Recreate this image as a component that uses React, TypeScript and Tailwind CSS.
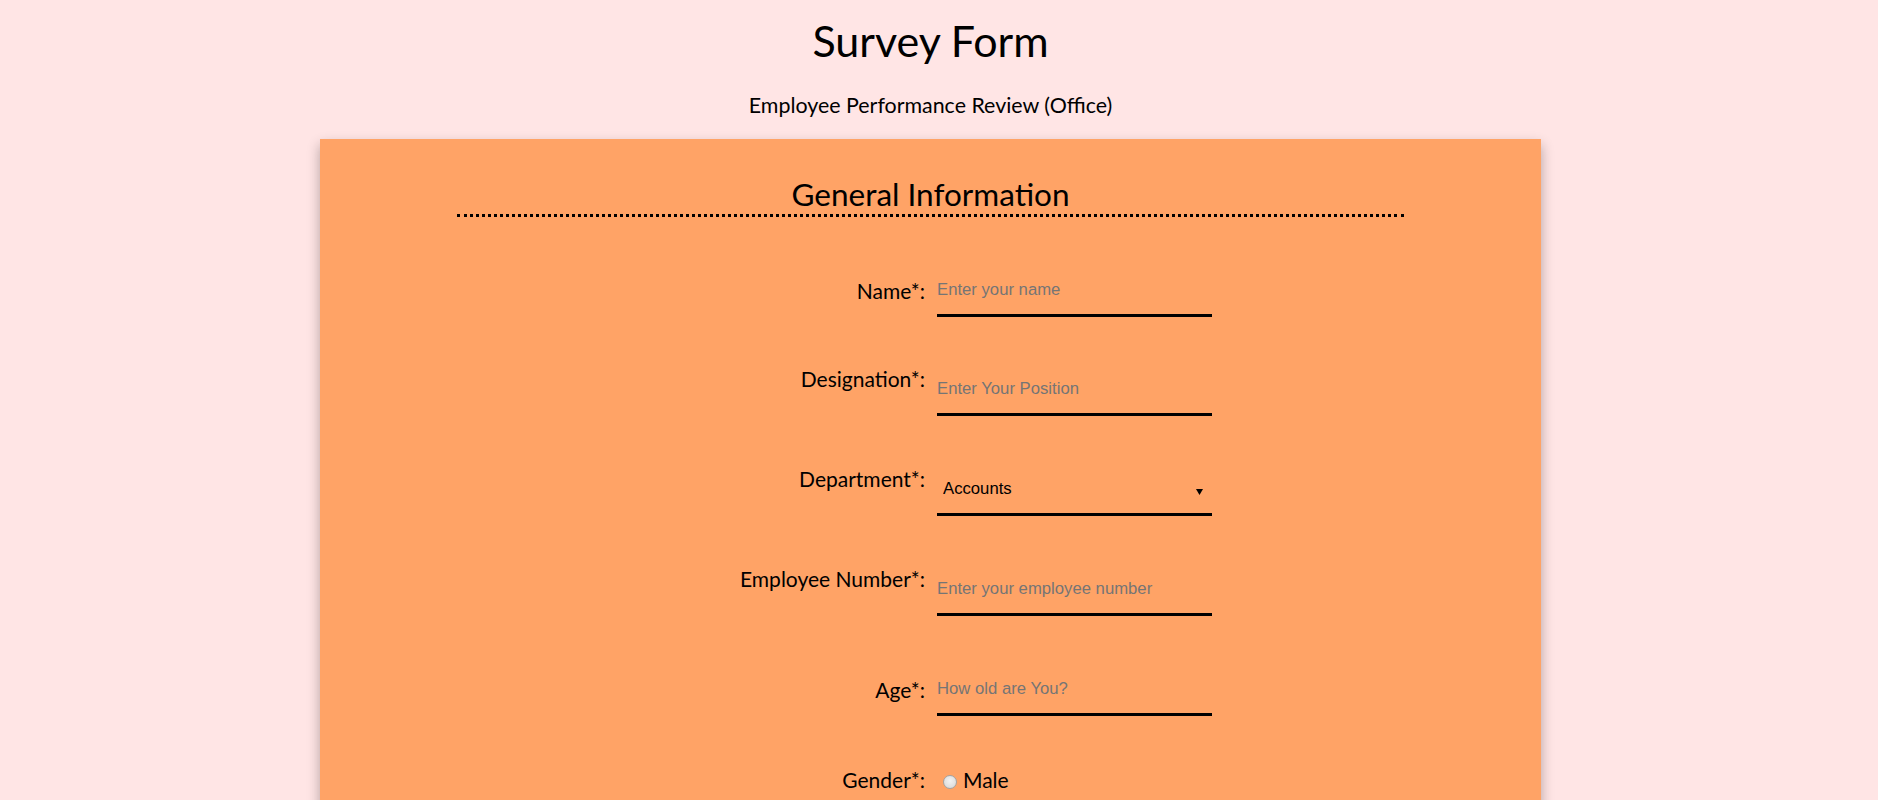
import React from 'react';

const labelCls = "w-[605px] shrink-0 text-right text-[21px] leading-[24px] text-black";
const inputCls =
  "ml-[12px] w-[275px] h-[36px] bg-transparent border-0 border-b-[3px] border-black pt-0 pb-[15px] px-0 text-[16.7px] leading-[18px] text-black outline-none placeholder:text-[#757575] font-['Liberation_Sans',Arial,sans-serif]";

function TextRow({ label, placeholder, top, inputTop }: { label: string; placeholder: string; top: string; inputTop: string }) {
  return (
    <div className={`flex items-start ${top}`}>
      <label className={labelCls}>{label}</label>
      <input type="text" placeholder={placeholder} className={`${inputCls} ${inputTop}`} />
    </div>
  );
}

export default function App() {
  return (
    <div className="min-h-screen bg-[#ffe5e5] font-['Lato','Noto_Sans',sans-serif] text-black pb-16 pr-[17px]">
      {/* Encabezado */}
      <h1 className="pt-[17px] text-center text-[43px] leading-[48px] font-normal">Survey Form</h1>
      <p className="mt-[28px] text-center text-[21.4px] leading-[24px]">Employee Performance Review (Office)</p>

      <div className="mx-auto mt-[22px] w-[1221px] bg-[#ffa366] pt-[37px] pb-[80px] shadow-[0_6px_12px_rgba(0,0,0,0.3)]">
        <div className="mx-auto w-[947px] border-b-[3px] border-dotted border-black pb-[2px]">
          <h2 className="text-center text-[31.5px] leading-[36px] font-normal">General Information</h2>
        </div>

        <form>
          <TextRow label="Name*:" placeholder="Enter your name" top="mt-[62px]" inputTop="mt-[2px]" />
          <TextRow label="Designation*:" placeholder="Enter Your Position" top="mt-[50px]" inputTop="mt-[13px]" />

          <div className="flex items-start mt-[51px]">
            <label className={labelCls}>Department*:</label>
            <div className="relative ml-[12px] mt-[13px] w-[275px]">
              <select
                defaultValue="accounts"
                className="block w-full h-[36px] appearance-none bg-transparent border-0 border-b-[3px] border-black pt-0 pb-[15px] pl-[6px] pr-6 text-[16.7px] leading-[18px] text-black outline-none font-['Liberation_Sans',Arial,sans-serif]"
              >
                <option value="accounts">Accounts</option>
                <option value="hr">Human Resources</option>
                <option value="it">IT</option>
                <option value="sales">Sales</option>
              </select>
              <svg className="pointer-events-none absolute right-[9px] top-[9px]" width="7" height="6" viewBox="0 0 7 6">
                <path d="M0 0 H7 L3.5 6 Z" fill="#000" />
              </svg>
            </div>
          </div>

          <TextRow label="Employee Number*:" placeholder="Enter your employee number" top="mt-[51px]" inputTop="mt-[13px]" />
          <TextRow label="Age*:" placeholder="How old are You?" top="mt-[62px]" inputTop="mt-[2px]" />

          <div className="flex items-start mt-[52px]">
            <label className={labelCls}>Gender*:</label>
            <div className="ml-[12px] flex flex-col gap-[12px]">
              {['Male', 'Female', 'Other'].map((g) => (
                <label key={g} className="flex items-center h-[24px] text-[21px] leading-[24px]">
                  <span className="ml-[6px] mr-[6px] mt-[4px] inline-block h-[14px] w-[14px] rounded-full border border-[#a3a3a3] bg-[radial-gradient(circle_at_50%_40%,#f2f2f2,#d6d6d6)]" />
                  {g}
                </label>
              ))}
            </div>
          </div>
        </form>
      </div>
    </div>
  );
}
